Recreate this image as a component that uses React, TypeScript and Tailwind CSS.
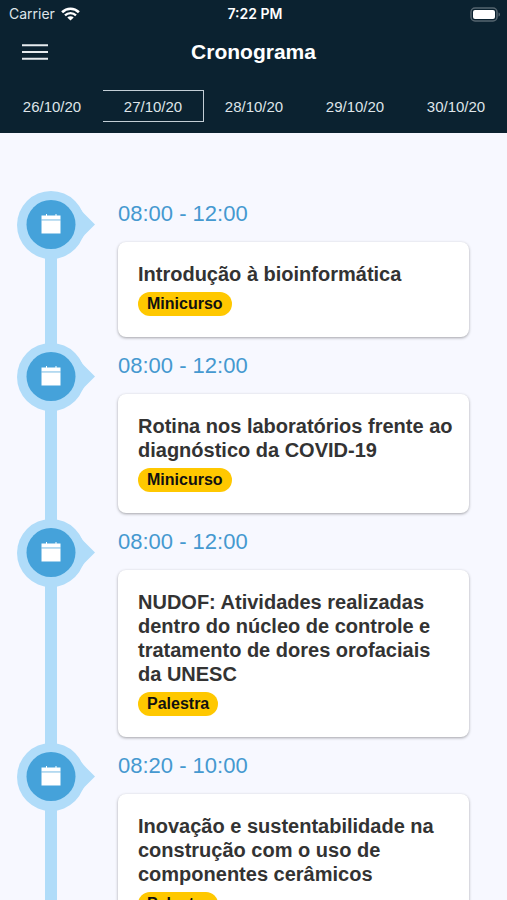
import clsx from "clsx";
import React, { useState } from "react";

const days = ["26/10/20", "27/10/20", "28/10/20", "29/10/20", "30/10/20"];

const events = [
  {
    time: "08:00 - 12:00",
    title: "Introdução à bioinformática",
    type: "Minicurso",
  },
  {
    time: "08:00 - 12:00",
    title: "Rotina nos laboratórios frente ao diagnóstico da COVID-19",
    type: "Minicurso",
  },
  {
    time: "08:00 - 12:00",
    title:
      "NUDOF: Atividades realizadas dentro do núcleo de controle e tratamento de dores orofaciais da UNESC",
    type: "Palestra",
  },
  {
    time: "08:20 - 10:00",
    title:
      "Inovação e sustentabilidade na construção com o uso de componentes cerâmicos",
    type: "Palestra",
  },
];

const StatusBar = () => (
  <div className="grid grid-cols-3 items-center h-7 pl-[9px] pr-[6px] font-['Inter',sans-serif] text-sm">
    <div className="flex items-center gap-1.5 text-[#dfe5e9]">
      Carrier
      <svg width="19" height="14" viewBox="0 0 19 14" fill="none">
        <path
          d="M1.1 5.200a12 12 0 0 1 16.8 0"
          stroke="#fff"
          strokeWidth="2.6"
        />
        <path
          d="M4 8.400a7.800 7.800 0 0 1 11 0"
          stroke="#fff"
          strokeWidth="2.3"
        />
        <path d="M9.500 13.600 6.300 10.500a4.600 4.600 0 0 1 6.400 0Z" fill="#fff" />
      </svg>
    </div>
    <div className="text-center font-semibold text-white">7:22 PM</div>
    <svg
      className="justify-self-end"
      width="31"
      height="15"
      viewBox="0 0 31 15"
      fill="none"
    >
      <rect
        x="1"
        y="1"
        width="26"
        height="13"
        rx="4"
        stroke="#56656f"
        strokeWidth="1.5"
      />
      <rect x="3" y="3" width="22" height="9" rx="2" fill="#fff" />
      <path d="M28.500 5.500c2 .6 2 3.400 0 4Z" fill="#56656f" />
    </svg>
  </div>
);

const Marker = () => (
  <svg width="78" height="68" viewBox="0 0 78 68" className="shrink-0">
    <path
      d="M62 15.500C64 19.500 67 22.500 70 25.500L78 33.500L70 41.500C67 44.500 64 48 62 52Z"
      fill="#b0dcf9"
    />
    <circle cx="34" cy="34" r="34" fill="#b0dcf9" />
    <circle cx="34" cy="33.500" r="24.500" fill="#45a2da" />
    <path
      d="M24.500 28.500V24.500H29V23H30V24.500H38.500V23H39.500V24.500H43.500V28.500Z"
      fill="#fff"
    />
    <path d="M24.500 28.500H43.500V29.500H24.500Z" fill="#c4e0f3" />
    <path d="M24.500 29.500H43.500V42.500H24.500Z" fill="#fff" />
  </svg>
);

const Event = ({ event }) => (
  <li className="flex gap-[23px]">
    <div className="flex flex-col">
      <Marker />
      <div className="grow w-3 ml-7 -my-px bg-[#b0dcf9]" />
    </div>

    <div className="grow pt-[9px] pb-1.5">
      <time className="block text-[22px] leading-7 text-[#4599d0]">
        {event.time}
      </time>
      <div className="mt-3.5 pt-5 pb-[21px] pl-5 pr-4 bg-white rounded-lg shadow-[0_1px_3px_rgba(0,0,0,0.35)]">
        <h2 className="text-xl leading-6 font-bold text-[#333]">
          {event.title}
        </h2>
        <span className="block w-fit mt-1.5 px-[9px] rounded-full bg-[#ffc800] text-base leading-6 font-bold text-[#111]">
          {event.type}
        </span>
      </div>
    </div>
  </li>
);

const App = () => {
  const [selected, setSelected] = useState("27/10/20");

  return (
    <div className="flex flex-col h-screen bg-[#f7f8ff] font-['Liberation_Sans',Arial,sans-serif]">
      <header className="shrink-0 pb-[11px] bg-[#0b2230] text-white">
        <StatusBar />

        <div className="grid grid-cols-[1fr_auto_1fr] items-center h-12 px-[22px]">
          <button aria-label="Menu" className="w-fit">
            <svg width="26" height="16" viewBox="0 0 26 16">
              <path
                d="M0 1.200H26M0 8H26M0 14.800H26"
                stroke="#e6ebee"
                strokeWidth="2"
              />
            </svg>
          </button>
          <h1 className="text-[21px] leading-6 font-bold">Cronograma</h1>
        </div>

        <nav className="grid grid-cols-5 pl-0.5 mt-3.5">
          {days.map((day) => (
            <button
              key={day}
              onClick={() => setSelected(day)}
              className={clsx(
                "h-8 pt-0.5 text-[15px] text-[#dfe5e9] border-y border-r",
                day === selected ? "border-[#c3ced6]" : "border-transparent",
              )}
            >
              {day}
            </button>
          ))}
        </nav>
      </header>

      <main className="grow overflow-y-auto [scrollbar-width:none]">
        <ul className="pt-[58px] pl-[17px] pr-[38px]">
          {events.map((event, index) => (
            <Event key={index} event={event} />
          ))}
        </ul>
      </main>
    </div>
  );
};

export default App;
